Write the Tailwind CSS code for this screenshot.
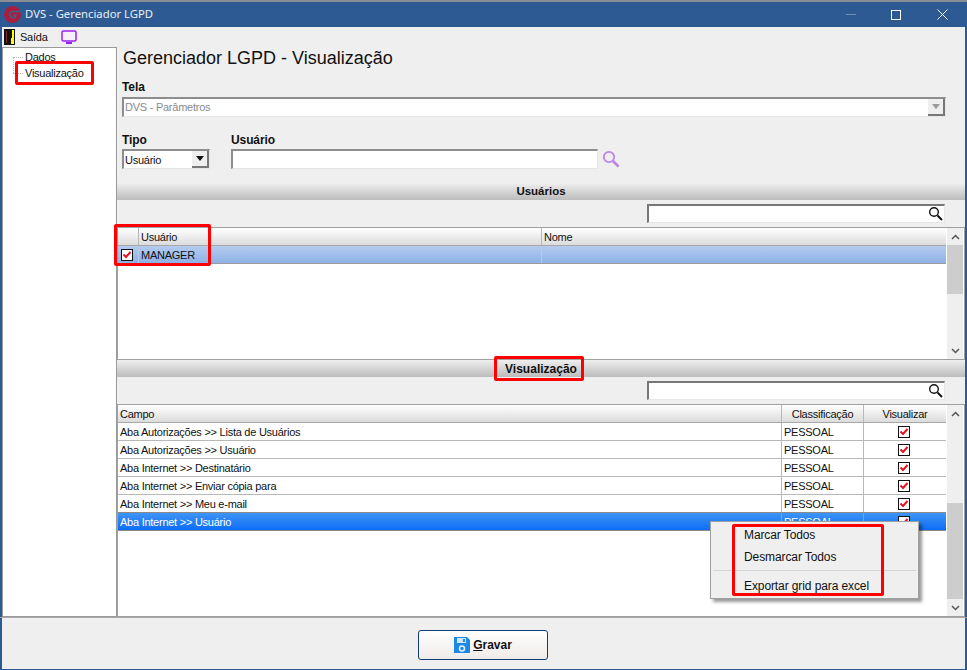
<!DOCTYPE html>
<html lang="en">
<head>
  <meta charset="UTF-8">
  <title>DVS - Gerenciador LGPD</title>
  <script src="https://cdn.jsdelivr.net/npm/@tailwindcss/browser@4"></script>
</head>
<body class="bg-[#efefef] overflow-hidden">
<div class="relative w-[967px] h-[670px] flex flex-col bg-[#efefef] border-x-2 border-b border-[#2d5a92] font-['Liberation_Sans',sans-serif] text-[11px] tracking-[-0.25px] text-[#111]">

  <!-- title bar -->
  <div class="h-[27px] -mx-[2px] shrink-0 flex items-center bg-[#2d5a92] border-t-2 border-[#8a8f96] text-white tracking-normal">
    <svg class="ml-[4px]" width="17" height="17" viewBox="0 0 17 17">
      <circle cx="8.500" cy="8.500" r="8.400" fill="#a81e3c"/>
      <path d="M16 5.500H8.500C7 5.500 5.800 7 5.800 8.500S7 11.500 8.500 11.500H11l.8-2.500H9" fill="none" stroke="#3f5f90" stroke-width="1.500"/>
    </svg>
    <span class="ml-[4px] font-['Noto_Sans',sans-serif] text-[11.300px] text-[#e8eef6]">DVS - Gerenciador LGPD</span>
    <div class="ml-auto flex items-center">
      <span class="w-[10px] h-px bg-[#6f8fb8] mr-[35px]"></span>
      <span class="w-[10px] h-[10px] border border-white mr-[36px]"></span>
      <svg class="mr-[19px]" width="11" height="11" viewBox="0 0 11 11"><path d="M.5.500l10 10M10.500.500l-10 10" stroke="#fff"/></svg>
    </div>
  </div>

  <!-- menu -->
  <div class="h-[20px] shrink-0 flex items-center">
    <svg class="ml-[2px]" width="11" height="16" viewBox="0 0 11 16">
      <rect width="11" height="16" fill="#111"/>
      <rect x="5" y="1" width="5" height="14" fill="#ffff00"/>
      <path d="M5 1h3v8H7v6H5z" fill="#111"/>
      <rect x="2" y="2" width="1" height="12" fill="#8a2a20"/>
    </svg>
    <span class="ml-[5px] text-[11px]">Saída</span>
    <svg class="ml-[13px]" width="16" height="15" viewBox="0 0 16 15">
      <rect x="1" y="1" width="14" height="10" rx="1.500" fill="#f4f0fb" stroke="#9a22ee" stroke-width="1.500"/>
      <rect x="5" y="12" width="6" height="2" fill="#9a22ee"/>
    </svg>
  </div>

  <div class="flex flex-1 min-h-0">
    <!-- tree -->
    <div class="relative w-[115px] shrink-0 bg-white border border-[#9a9a9a]">
      <div class="absolute left-[10px] top-[9px] h-[16px] border-l border-dotted border-[#bbb]"></div>
      <div class="absolute left-[10px] top-[9px] w-[10px] border-t border-dotted border-[#bbb]"></div>
      <div class="absolute left-[10px] top-[25px] w-[10px] border-t border-dotted border-[#bbb]"></div>
      <div class="pl-[22px] pt-[1px] leading-[16px]">
        <div>Dados</div>
        <div>Visualização</div>
      </div>
    </div>

    <!-- content -->
    <div class="flex-1 min-w-0">
      <div class="pl-[6px] pt-[1px] h-[29px] text-[18px] leading-[20px] tracking-normal">Gerenciador LGPD - Visualização</div>

      <div class="pl-[5px] mt-[4px] font-bold text-[12px] tracking-[-0.1px] leading-[14px]">Tela</div>
      <div class="ml-[5px] mt-[3px] w-[824px] h-[20px] flex bg-white border-t-2 border-l-2 border-[#8d8d8d] border-b border-r border-b-[#e6e6e6] border-r-[#e6e6e6]">
        <span class="flex-1 pl-[1px] leading-[17px] text-[#8a8a8a]">DVS - Parâmetros</span>
        <span class="w-[17px] flex items-center justify-center bg-[#efefef] border-r-2 border-b-2 border-[#777]">
          <svg width="8" height="5" viewBox="0 0 8 5"><path d="M0 0h8L4 5z" fill="#999"/></svg>
        </span>
      </div>

      <div class="flex mt-[16px] pl-[5px]">
        <div class="w-[109px]">
          <div class="font-bold text-[12px] tracking-[-0.1px] leading-[14px]">Tipo</div>
          <div class="mt-[2px] w-[88px] h-[20px] flex bg-white border-t-2 border-l-2 border-[#8d8d8d] border-b border-r border-b-[#e6e6e6] border-r-[#e6e6e6]">
            <span class="flex-1 pl-[1px] leading-[19px]">Usuário</span>
            <span class="w-[17px] flex items-center justify-center bg-[#efefef] border-r-2 border-b-2 border-[#777]">
              <svg width="8" height="5" viewBox="0 0 8 5"><path d="M0 0h8L4 5z" fill="#111"/></svg>
            </span>
          </div>
        </div>
        <div>
          <div class="font-bold text-[12px] tracking-[-0.1px] leading-[14px]">Usuário</div>
          <div class="flex items-center mt-[2px]">
            <div class="w-[367px] h-[20px] bg-white border-t-2 border-l-2 border-[#8d8d8d] border-b border-r border-b-[#e6e6e6] border-r-[#e6e6e6]"></div>
            <svg class="ml-[4px]" width="18" height="18" viewBox="0 0 18 18" fill="none" stroke="#bb86e6">
              <circle cx="7" cy="7" r="5.200" stroke-width="1.800"/><path d="M11 11l5.500 5.500" stroke-width="2.600"/>
            </svg>
          </div>
        </div>
      </div>

      <!-- usuarios -->
      <div class="mt-[14px] h-[17px] flex items-center justify-center bg-gradient-to-b from-[#efefef] to-[#bcbcbc] font-bold text-[11.500px] tracking-normal">Usuários</div>
      <div class="h-[27px] flex items-start justify-end pr-[20px] pt-[4px]">
        <div class="w-[298px] h-[19px] flex justify-end bg-white border-t-2 border-l-2 border-[#777] border-b border-r border-b-[#e6e6e6] border-r-[#e6e6e6]">
          <svg class="mr-[1px]" width="15" height="15" viewBox="0 0 15 15" fill="none" stroke="#111"><circle cx="6" cy="6" r="4.300" stroke-width="1.400"/><path d="M9.500 9.500l4.500 4.500" stroke-width="2"/></svg>
        </div>
      </div>
      <div class="h-[133px] flex bg-white border border-[#a0a0a0]">
        <div class="w-[828px] shrink-0">
          <div class="flex h-[18px] bg-gradient-to-b from-white to-[#dcdcdc] border-b border-[#a8a8a8]">
            <div class="w-[21px] border-r border-[#b8b8b8]"></div>
            <div class="w-[403px] pl-[2px] leading-[18px] border-r border-[#b8b8b8]">Usuário</div>
            <div class="flex-1 pl-[2px] leading-[18px]">Nome</div>
          </div>
          <div class="flex h-[18px] bg-gradient-to-b from-[#b4cbef] to-[#8fb1e6] border-b border-[#9a9a9a]">
            <div class="w-[21px] flex items-center justify-center pr-[2px] border-r border-[#b8cbe6]">
              <svg width="12" height="12" viewBox="0 0 12 12"><rect x=".5" y=".5" width="11" height="11" fill="#fff" stroke="#111"/><path d="M2.500 5.500l2.500 2.500 4.500-5" fill="none" stroke="#e81224" stroke-width="2"/></svg>
            </div>
            <div class="w-[403px] pl-[2px] leading-[19px] border-r border-[#b8cbe6]">MANAGER</div>
            <div class="flex-1"></div>
          </div>
        </div>
        <div class="ml-[1px] w-[16px] flex flex-col bg-[#efefef]">
          <div class="h-[17px] flex items-center justify-center"><svg width="9" height="6" viewBox="0 0 9 6"><path d="M1 5l3.500-3.500L8 5" fill="none" stroke="#555" stroke-width="1.500"/></svg></div>
          <div class="h-[49px] bg-[#cdcdcd]"></div>
          <div class="flex-1"></div>
          <div class="h-[17px] flex items-center justify-center"><svg width="9" height="6" viewBox="0 0 9 6"><path d="M1 1l3.500 3.500L8 1" fill="none" stroke="#555" stroke-width="1.500"/></svg></div>
        </div>
      </div>

      <!-- visualizacao -->
      <div class="h-[17px] flex items-center justify-center bg-gradient-to-b from-[#efefef] to-[#bcbcbc] font-bold text-[12px] tracking-normal">Visualização</div>
      <div class="h-[27px] flex items-start justify-end pr-[20px] pt-[4px]">
        <div class="w-[298px] h-[19px] flex justify-end bg-white border-t-2 border-l-2 border-[#777] border-b border-r border-b-[#e6e6e6] border-r-[#e6e6e6]">
          <svg class="mr-[1px]" width="15" height="15" viewBox="0 0 15 15" fill="none" stroke="#111"><circle cx="6" cy="6" r="4.300" stroke-width="1.400"/><path d="M9.500 9.500l4.500 4.500" stroke-width="2"/></svg>
        </div>
      </div>
      <div class="h-[213px] flex bg-white border border-[#a0a0a0]">
        <div class="w-[828px] shrink-0">
          <div class="flex h-[18px] bg-gradient-to-b from-white to-[#dcdcdc] border-b border-[#a8a8a8] leading-[19px]">
            <div class="w-[664px] pl-[2px] border-r border-[#b8b8b8]">Campo</div>
            <div class="w-[82px] text-center border-r border-[#b8b8b8]">Classificação</div>
            <div class="flex-1 text-center">Visualizar</div>
          </div>
          <div class="flex h-[18px] border-b border-[#b8b8b8] leading-[19px]">
            <div class="w-[664px] pl-[2px] border-r border-[#b8b8b8]">Aba Autorizações &gt;&gt; Lista de Usuários</div>
            <div class="w-[82px] pl-[2px] border-r border-[#b8b8b8]">PESSOAL</div>
            <div class="flex-1 flex items-center justify-center pr-[2px]"><svg width="12" height="12" viewBox="0 0 12 12"><rect x=".5" y=".5" width="11" height="11" fill="#fff" stroke="#111"/><path d="M2.500 5.500l2.500 2.500 4.500-5" fill="none" stroke="#e81224" stroke-width="2"/></svg></div>
          </div>
          <div class="flex h-[18px] border-b border-[#b8b8b8] leading-[19px]">
            <div class="w-[664px] pl-[2px] border-r border-[#b8b8b8]">Aba Autorizações &gt;&gt; Usuário</div>
            <div class="w-[82px] pl-[2px] border-r border-[#b8b8b8]">PESSOAL</div>
            <div class="flex-1 flex items-center justify-center pr-[2px]"><svg width="12" height="12" viewBox="0 0 12 12"><rect x=".5" y=".5" width="11" height="11" fill="#fff" stroke="#111"/><path d="M2.500 5.500l2.500 2.500 4.500-5" fill="none" stroke="#e81224" stroke-width="2"/></svg></div>
          </div>
          <div class="flex h-[18px] border-b border-[#b8b8b8] leading-[19px]">
            <div class="w-[664px] pl-[2px] border-r border-[#b8b8b8]">Aba Internet &gt;&gt; Destinatário</div>
            <div class="w-[82px] pl-[2px] border-r border-[#b8b8b8]">PESSOAL</div>
            <div class="flex-1 flex items-center justify-center pr-[2px]"><svg width="12" height="12" viewBox="0 0 12 12"><rect x=".5" y=".5" width="11" height="11" fill="#fff" stroke="#111"/><path d="M2.500 5.500l2.500 2.500 4.500-5" fill="none" stroke="#e81224" stroke-width="2"/></svg></div>
          </div>
          <div class="flex h-[18px] border-b border-[#b8b8b8] leading-[19px]">
            <div class="w-[664px] pl-[2px] border-r border-[#b8b8b8]">Aba Internet &gt;&gt; Enviar cópia para</div>
            <div class="w-[82px] pl-[2px] border-r border-[#b8b8b8]">PESSOAL</div>
            <div class="flex-1 flex items-center justify-center pr-[2px]"><svg width="12" height="12" viewBox="0 0 12 12"><rect x=".5" y=".5" width="11" height="11" fill="#fff" stroke="#111"/><path d="M2.500 5.500l2.500 2.500 4.500-5" fill="none" stroke="#e81224" stroke-width="2"/></svg></div>
          </div>
          <div class="flex h-[18px] border-b border-[#8a8a8a] leading-[19px]">
            <div class="w-[664px] pl-[2px] border-r border-[#b8b8b8]">Aba Internet &gt;&gt; Meu e-mail</div>
            <div class="w-[82px] pl-[2px] border-r border-[#b8b8b8]">PESSOAL</div>
            <div class="flex-1 flex items-center justify-center pr-[2px]"><svg width="12" height="12" viewBox="0 0 12 12"><rect x=".5" y=".5" width="11" height="11" fill="#fff" stroke="#111"/><path d="M2.500 5.500l2.500 2.500 4.500-5" fill="none" stroke="#e81224" stroke-width="2"/></svg></div>
          </div>
          <div class="flex h-[18px] bg-gradient-to-b from-[#3d94f6] to-[#0a6cf5] border-b border-[#8a8a8a] leading-[19px] text-white">
            <div class="w-[664px] pl-[2px] border-r border-[#6aa8f0]">Aba Internet &gt;&gt; Usuário</div>
            <div class="w-[82px] pl-[2px] border-r border-[#6aa8f0]">PESSOAL</div>
            <div class="flex-1 flex items-center justify-center pr-[2px]"><svg width="12" height="12" viewBox="0 0 12 12"><rect x=".5" y=".5" width="11" height="11" fill="#fff" stroke="#111"/><path d="M2.500 5.500l2.500 2.500 4.500-5" fill="none" stroke="#e81224" stroke-width="2"/></svg></div>
          </div>
        </div>
        <div class="ml-[1px] w-[16px] flex flex-col bg-[#efefef]">
          <div class="h-[17px] flex items-center justify-center"><svg width="9" height="6" viewBox="0 0 9 6"><path d="M1 5l3.500-3.500L8 5" fill="none" stroke="#555" stroke-width="1.500"/></svg></div>
          <div class="h-[81px]"></div>
          <div class="flex-1 bg-[#cdcdcd]"></div>
          <div class="h-[17px] flex items-center justify-center"><svg width="9" height="6" viewBox="0 0 9 6"><path d="M1 1l3.500 3.500L8 1" fill="none" stroke="#555" stroke-width="1.500"/></svg></div>
        </div>
      </div>
    </div>
  </div>

  <!-- footer -->
  <div class="h-[52px] shrink-0 -mx-[2px] flex items-start justify-center pt-[12px] border-t border-[#a8a8a8] pr-[1px]">
    <button class="w-[130px] h-[30px] flex items-center justify-center rounded-[3px] border border-[#0f3c78] bg-gradient-to-b from-white to-[#efebe8] font-bold text-[12px] tracking-normal">
      <svg width="16" height="16" viewBox="0 0 16 16">
        <path d="M0 0h13l3 3v13H0z" fill="#1e88e5"/>
        <rect x="3" y="1" width="9" height="5" fill="#cfe6fb"/>
        <rect x="9" y="2" width="2" height="3" fill="#1e88e5"/>
        <circle cx="8" cy="11.500" r="2.500" fill="none" stroke="#e3f1fd" stroke-width="1.500"/>
      </svg>
      <span class="ml-[3px]"><span class="underline">G</span>ravar</span>
    </button>
  </div>

  <!-- context menu -->
  <div class="absolute left-[708px] top-[521px] w-[209px] h-[78px] bg-[#efefef] border border-[#a0a0a0] shadow-[3px_3px_3px_rgba(0,0,0,0.4)] pl-[33px] text-[12px] tracking-[-0.1px]">
    <div class="h-[22px] pt-[6px] leading-[14px]">Marcar Todos</div>
    <div class="h-[22px] pt-[6px] leading-[14px]">Desmarcar Todos</div>
    <div class="-ml-[31px] mr-[2px] mt-[4px] border-t border-[#d4d4d4]"></div>
    <div class="pt-[8px] leading-[14px]">Exportar grid para excel</div>
  </div>

  <!-- annotation boxes -->
  <div class="absolute left-[13px] top-[61px] w-[79px] h-[24px] border-[3px] border-[#ff0000] rounded-[2px]"></div>
  <div class="absolute left-[112px] top-[224px] w-[97px] h-[42px] border-[3px] border-[#ff0000] rounded-[2px]"></div>
  <div class="absolute left-[492px] top-[356px] w-[90px] h-[25px] border-[3px] border-[#ff0000] rounded-[2px]"></div>
  <div class="absolute left-[730px] top-[524px] w-[152px] h-[72px] border-[3px] border-[#ff0000] rounded-[2px]"></div>
</div>
</body>
</html>
